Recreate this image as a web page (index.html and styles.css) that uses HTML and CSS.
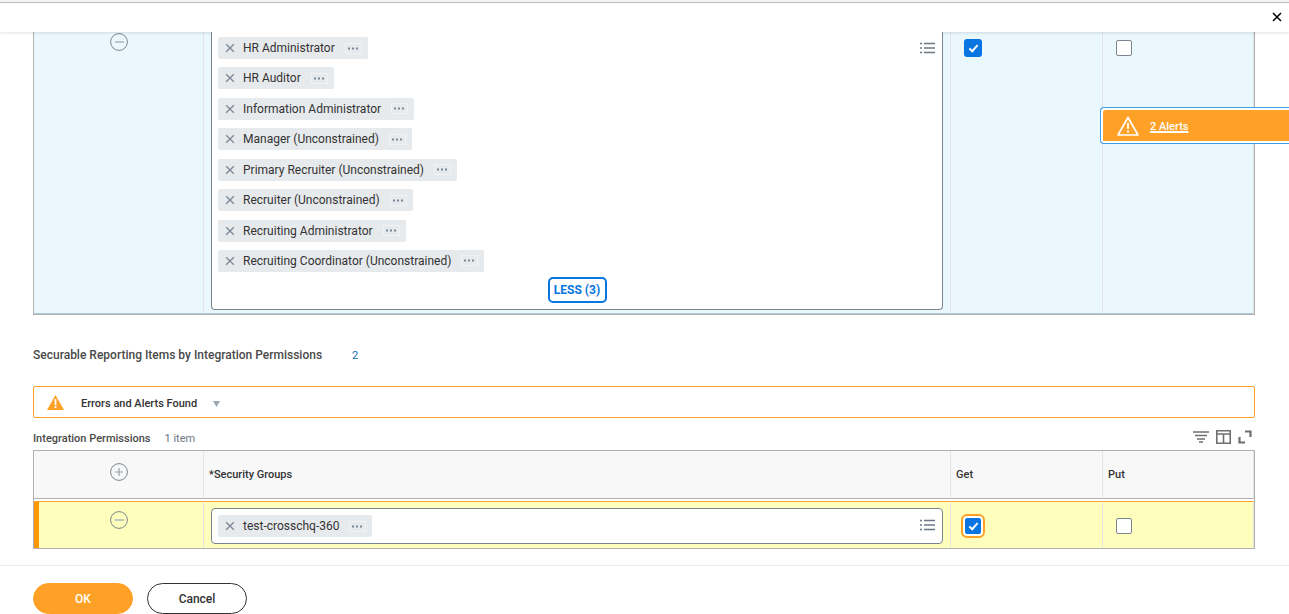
FILE: index.html
```html
<!DOCTYPE html>
<html lang="en">
<head>
    <meta charset="UTF-8">
    <meta name="viewport" content="width=device-width, initial-scale=1.0">
    <title>Integration Permissions</title>
    <link rel="stylesheet" href="styles.css">
</head>
<body>
    <!-- shared icons -->
    <svg class="sprite" aria-hidden="true">
        <symbol id="icon-x" viewBox="0 0 10 10"><path d="M1.200 1.200l7.600 7.600M8.800 1.200l-7.600 7.600" fill="none" stroke="currentColor" stroke-width="1.300"/></symbol>
        <symbol id="icon-dots" viewBox="0 0 11 3"><path d="M0 .500h2v2H0zM4 .500h2v2H4zM8 .500h2v2H8z" fill="currentColor"/></symbol>
        <symbol id="icon-list" viewBox="0 0 15 12"><path d="M0 1.500h2M0 6h2M0 10.500h2M4 1.500h11M4 6h11M4 10.500h11" fill="none" stroke="currentColor" stroke-width="1.500"/></symbol>
        <symbol id="icon-minus" viewBox="0 0 18 18"><circle cx="9" cy="9" r="8.400" fill="none" stroke="#7b858f"/><path d="M5 9h9" stroke="#a9b3ba" stroke-width="1.500"/></symbol>
        <symbol id="icon-plus" viewBox="0 0 18 18"><circle cx="9" cy="9" r="8.400" fill="none" stroke="#7b858f"/><path d="M5 9h8M9 5v8" stroke="#98a1a9" stroke-width="1.200"/></symbol>
    </svg>

    <header class="dialog-header">
        <button class="close-btn" aria-label="Close">
            <svg width="10" height="10" viewBox="0 0 10 10"><path d="M1 1l8 8M9 1l-8 8" fill="none" stroke="#000" stroke-width="1.500"/></svg>
        </button>
    </header>

    <a href="#errors" class="alerts-tab">
        <svg width="24" height="22" viewBox="0 0 24 22"><path d="M12 2.500L22 20H2z" fill="none" stroke="#fff" stroke-width="1.700" stroke-linejoin="round"/><path d="M12 8v6M12 15.500v2" stroke="#fff" stroke-width="1.800"/></svg>
        <span>2 Alerts</span>
    </a>

    <main class="content">
        <table class="grid grid-top" aria-label="Permissions">
            <colgroup><col class="col-action"><col><col class="col-get"><col class="col-put"></colgroup>
            <tbody>
                <tr class="row-selected">
                    <td class="action"><button class="icon-btn" aria-label="Remove row"><svg width="18" height="18"><use href="#icon-minus"/></svg></button></td>
                    <td class="groups">
                        <div class="prompt">
                            <ul class="chips">
                                <li class="chip"><button aria-label="Remove"><svg width="10" height="10"><use href="#icon-x"/></svg></button><span>HR Administrator</span><button class="more" aria-label="Related actions"><svg width="11" height="3"><use href="#icon-dots"/></svg></button></li>
                                <li class="chip"><button aria-label="Remove"><svg width="10" height="10"><use href="#icon-x"/></svg></button><span>HR Auditor</span><button class="more" aria-label="Related actions"><svg width="11" height="3"><use href="#icon-dots"/></svg></button></li>
                                <li class="chip"><button aria-label="Remove"><svg width="10" height="10"><use href="#icon-x"/></svg></button><span>Information Administrator</span><button class="more" aria-label="Related actions"><svg width="11" height="3"><use href="#icon-dots"/></svg></button></li>
                                <li class="chip"><button aria-label="Remove"><svg width="10" height="10"><use href="#icon-x"/></svg></button><span>Manager (Unconstrained)</span><button class="more" aria-label="Related actions"><svg width="11" height="3"><use href="#icon-dots"/></svg></button></li>
                                <li class="chip"><button aria-label="Remove"><svg width="10" height="10"><use href="#icon-x"/></svg></button><span>Primary Recruiter (Unconstrained)</span><button class="more" aria-label="Related actions"><svg width="11" height="3"><use href="#icon-dots"/></svg></button></li>
                                <li class="chip"><button aria-label="Remove"><svg width="10" height="10"><use href="#icon-x"/></svg></button><span>Recruiter (Unconstrained)</span><button class="more" aria-label="Related actions"><svg width="11" height="3"><use href="#icon-dots"/></svg></button></li>
                                <li class="chip"><button aria-label="Remove"><svg width="10" height="10"><use href="#icon-x"/></svg></button><span>Recruiting Administrator</span><button class="more" aria-label="Related actions"><svg width="11" height="3"><use href="#icon-dots"/></svg></button></li>
                                <li class="chip"><button aria-label="Remove"><svg width="10" height="10"><use href="#icon-x"/></svg></button><span>Recruiting Coordinator (Unconstrained)</span><button class="more" aria-label="Related actions"><svg width="11" height="3"><use href="#icon-dots"/></svg></button></li>
                            </ul>
                            <button class="list-btn" aria-label="Prompt options"><svg width="15" height="12"><use href="#icon-list"/></svg></button>
                            <button class="less-btn">LESS (3)</button>
                        </div>
                    </td>
                    <td class="check"><input type="checkbox" aria-label="Get" checked></td>
                    <td class="check"><input type="checkbox" aria-label="Put"></td>
                </tr>
            </tbody>
        </table>

        <h2 class="section-title">Securable Reporting Items by Integration Permissions <a href="#items">2</a></h2>

        <button class="error-bar" id="errors">
            <svg width="17" height="15" viewBox="0 0 17 15"><path d="M8.500 0L17 15H0z" fill="#ffa126"/><path d="M8.500 4v6M8.500 11v2" stroke="#fff" stroke-width="1.800"/></svg>
            <span>Errors and Alerts Found</span>
            <svg class="caret" width="7" height="6"><path d="M0 0h7L3.500 6z" fill="#9aa9b3"/></svg>
        </button>

        <div class="grid-heading" id="items">
            <h3>Integration Permissions</h3>
            <span class="count">1 item</span>
            <div class="tools">
                <button aria-label="Filter"><svg width="16" height="12" viewBox="0 0 16 12"><path d="M0 1h16M2 4.500h12M4 8h8M6 11h4" fill="none" stroke="#6f6f6f" stroke-width="1.500"/></svg></button>
                <button aria-label="Columns"><svg width="15" height="14" viewBox="0 0 15 14"><path d="M.800.800h13.400v12.400H.800zM1 4h13M7.500 4v9" fill="none" stroke="#6f6f6f" stroke-width="1.600"/></svg></button>
                <button aria-label="Expand"><svg width="14" height="14" viewBox="0 0 14 14"><path d="M7 1.500h5.500V7M1.500 7v5.500H7" fill="none" stroke="#6f6f6f" stroke-width="2.200"/></svg></button>
            </div>
        </div>

        <table class="grid grid-bottom">
            <colgroup><col class="col-action"><col><col class="col-get"><col class="col-put"></colgroup>
            <thead>
                <tr>
                    <th class="action"><button class="icon-btn" aria-label="Add row"><svg width="18" height="18"><use href="#icon-plus"/></svg></button></th>
                    <th>*Security Groups</th>
                    <th>Get</th>
                    <th>Put</th>
                </tr>
            </thead>
            <tbody>
                <tr class="row-alert">
                    <td class="action"><button class="icon-btn" aria-label="Remove row"><svg width="18" height="18"><use href="#icon-minus"/></svg></button></td>
                    <td class="groups">
                        <div class="prompt">
                            <ul class="chips">
                                <li class="chip"><button aria-label="Remove"><svg width="10" height="10"><use href="#icon-x"/></svg></button><span>test-crosschq-360</span><button class="more" aria-label="Related actions"><svg width="11" height="3"><use href="#icon-dots"/></svg></button></li>
                            </ul>
                            <button class="list-btn" aria-label="Prompt options"><svg width="15" height="12"><use href="#icon-list"/></svg></button>
                        </div>
                    </td>
                    <td class="check"><input type="checkbox" class="has-alert" aria-label="Get" checked></td>
                    <td class="check"><input type="checkbox" aria-label="Put"></td>
                </tr>
            </tbody>
        </table>
    </main>

    <footer class="dialog-footer">
        <button class="btn btn-primary">OK</button>
        <button class="btn">Cancel</button>
    </footer>
</body>
</html>
```
FILE: styles.css
```css
* {
    box-sizing: border-box;
}
body {
    font-family: Roboto, Arial, sans-serif;
    font-size: 12px;
    line-height: 16px;
    margin: 0;
    color: #333;
    background: #fff;
}
button {
    font: inherit;
    color: inherit;
    background: none;
    border: none;
    padding: 0;
    cursor: pointer;
}
svg {
    display: block;
}
.sprite {
    display: none;
}

/* Header */
.dialog-header {
    position: relative;
    height: 32px;
    padding: 9px 7px 0;
    display: flex;
    justify-content: flex-end;
    align-items: flex-start;
    border-top: 2px solid #f5f5f5;
    box-shadow: inset 0 1px #bdbdbd, 0 1px 3px rgba(0,0,0,0.12);
}
.close-btn {
    padding: 1px 0;
}
.alerts-tab {
    position: absolute;
    top: 107px;
    right: 0;
    width: 189px;
    height: 37px;
    padding-left: 15px;
    display: flex;
    align-items: center;
    gap: 10px;
    color: #fff;
    font-weight: 500;
    font-size: 11px;
    background: #ffa126;
    background-clip: padding-box;
    border: 1px solid #3ba0e8;
    border-right: none;
    border-radius: 4px 0 0 4px;
    box-shadow: inset 2px 2px #fff, inset 0 -2px #fff;
}
.alerts-tab span {
    padding-top: 2px;
    text-decoration: underline;
    text-underline-offset: 2px;
}

/* Grids */
.content {
    padding: 0 34px 16px 33px;
}
.grid {
    width: 100%;
    table-layout: fixed;
    border-collapse: separate;
    border-spacing: 0;
    border: 1px solid #b0b0b0;
}
.grid-top {
    border-top: none;
}
.col-action {
    width: 170px;
}
.col-get {
    width: 152px;
}
.col-put {
    width: 151px;
}
th, td {
    padding: 0;
    text-align: left;
    vertical-align: top;
    border-right: 1px solid #e4e4e4;
}
th {
    height: 48px;
    padding: 0 5px;
    font-size: 11px;
    font-weight: 500;
    vertical-align: middle;
    background: #f8f8f8;
    border-bottom: 1px solid #b0b0b0;
}
.grid-bottom tbody::before {
    content: "";
    display: block;
    height: 2px;
}
.row-selected td {
    background: #eaf8fd;
    box-shadow: inset 0 -1px #a9cbdc;
}
.row-alert td {
    background: #feffbc;
    border-top: 1px solid #ffa126;
}
.row-alert td:first-child {
    box-shadow: inset 5px 0 #ff9800;
}
.icon-btn {
    display: block;
    margin: 0 auto;
}
th.action {
    padding-bottom: 6px;
}
td.action {
    padding-top: 9px;
}
.row-selected td.action {
    padding-top: 1px;
}

/* Prompt with selected groups */
td.groups {
    padding: 6px 7px 4px;
}
.row-selected td.groups {
    padding-top: 0;
}
.prompt {
    position: relative;
    min-height: 36px;
    padding: 6px;
    background: #fff;
    border: 1px solid #7b858f;
    border-radius: 4px;
}
.row-selected .prompt {
    padding-top: 5px;
    border-top: none;
    border-radius: 0 0 4px 4px;
}
.chips {
    margin: 0;
    padding: 0;
    list-style: none;
    display: flex;
    flex-direction: column;
    align-items: flex-start;
    justify-content: space-between;
}
.row-selected .chips {
    min-height: 235px;
}
.chip {
    display: flex;
    align-items: center;
    height: 22px;
    padding: 0 6px 0 7px;
    background: #e7eaed;
    border-radius: 2px;
    color: #333;
}
.chip button {
    color: #7b8794;
}
.chip span {
    margin: 0 10px 0 8px;
}
.chip .more {
    width: 17px;
    height: 11px;
    padding-left: 2px;
    border: 1px solid #f0f2f4;
}
.list-btn {
    position: absolute;
    top: 10px;
    right: 7px;
    color: #6b7785;
}
.less-btn {
    display: block;
    margin: 5px auto 0;
    width: 59px;
    height: 26px;
    font-weight: 700;
    color: #0875e1;
    border: 2px solid #0875e1;
    border-radius: 5px;
}

/* Checkboxes */
td.check {
    padding: 8px 13px 0 14px;
}
.row-alert td.check {
    padding-top: 16px;
}
td.check:last-child {
    padding-left: 13px;
}
input[type="checkbox"] {
    appearance: none;
    display: block;
    position: relative;
    width: 16px;
    height: 16px;
    margin: 0;
    background: #fff;
    border: 1px solid #7b858f;
    border-radius: 2px;
}
input[type="checkbox"]:checked {
    background: #0875e1;
    border-color: #0875e1;
    box-shadow: 0 0 0 1px #0875e1;
}
input[type="checkbox"]:checked::after {
    content: "";
    box-sizing: border-box;
    position: absolute;
    top: 2px;
    left: 5px;
    width: 5px;
    height: 9px;
    border: solid #fff;
    border-width: 0 2px 2px 0;
    transform: rotate(42deg);
}
input[type="checkbox"].has-alert {
    box-shadow: 0 0 0 2px #fff;
    outline: 2px solid #ffa126;
    outline-offset: 2px;
}

/* Section title and alerts */
.section-title {
    margin: 32px 0 22px;
    font-size: 12px;
    font-weight: 500;
    color: #4a4a4a;
}
.section-title a {
    margin-left: 27px;
    font-size: 11px;
    font-weight: 400;
    color: #0b6fb8;
    text-decoration: none;
}
.error-bar {
    display: flex;
    align-items: center;
    width: 100%;
    height: 32px;
    padding: 0 13px;
    font-size: 11px;
    font-weight: 500;
    border: 1px solid #ffa126;
    border-radius: 2px;
}
.error-bar span {
    margin: 3px 16px 0 17px;
}
.error-bar .caret {
    margin-top: 3px;
}
.grid-heading {
    display: flex;
    align-items: center;
    height: 32px;
    padding: 9px 3px 0 0;
    gap: 14px;
    font-size: 11px;
}
.grid-heading h3 {
    margin: 0;
    font-size: 11px;
    font-weight: 500;
    color: #4a4a4a;
}
.count {
    color: #6b7785;
}
.tools {
    margin-left: auto;
    padding-bottom: 3px;
    display: flex;
    align-items: center;
    gap: 7px;
}

/* Footer */
.dialog-footer {
    display: flex;
    gap: 14px;
    padding: 17px 33px 0;
    border-top: 1px solid #ececec;
}
.btn {
    width: 100px;
    height: 31px;
    font-weight: 500;
    border: 1px solid #333;
    border-radius: 16px;
}
.btn-primary {
    color: #fff;
    background: #ffa126;
    border-color: #ffa126;
}
```
